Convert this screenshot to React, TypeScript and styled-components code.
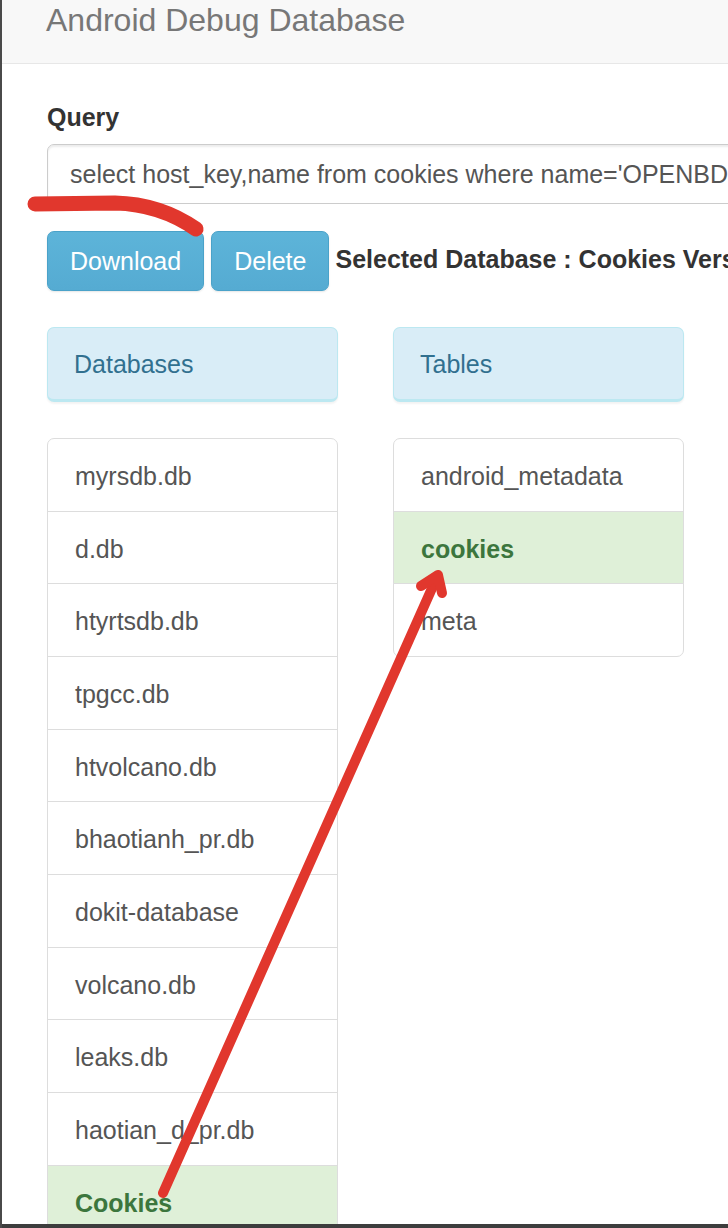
import React from "react";
import styled, { createGlobalStyle } from "styled-components";

const GlobalStyle = createGlobalStyle`
  html, body {
    margin: 0;
    padding: 0;
    background: #ffffff;
    overflow: hidden;
  }
  body {
    font-family: "Liberation Sans", Arial, Helvetica, sans-serif;
  }
  * { box-sizing: border-box; }
`;

const Page = styled.div`
  position: relative;
  width: 728px;
  height: 1228px;
  border-left: 2px solid #4a4a4a;
  display: flex;
  flex-direction: column;
  overflow: hidden;
  background: #fff;
`;

const Navbar = styled.header`
  flex: 0 0 64px;
  background: #f8f8f8;
  border-bottom: 1px solid #e7e7e7;
  padding: 4px 0 0 44px;
`;

const Brand = styled.div`
  font-size: 32px;
  line-height: 32px;
  color: #777;
  white-space: nowrap;
`;

const Main = styled.main`
  flex: 1 1 auto;
  min-height: 0;
  overflow: hidden;
  padding: 35px 0 0 45px;
`;

const Label = styled.div`
  font-weight: bold;
  font-size: 25px;
  line-height: 36px;
  color: #333;
`;

const QueryInput = styled.div`
  margin-top: 9px;
  width: 1200px;
  height: 60px;
  border: 1px solid #ccc;
  border-radius: 7px;
  box-shadow: inset 0 2px 2px rgba(0, 0, 0, 0.075);
  padding: 0 22px;
  display: flex;
  align-items: center;
  font-size: 25px;
  color: #555;
  white-space: nowrap;
`;

const ActionRow = styled.div`
  margin-top: 27px;
  display: flex;
  align-items: center;
  gap: 7px;
  white-space: nowrap;
`;

const Button = styled.button`
  height: 60px;
  padding: 0 22px;
  font-family: inherit;
  font-size: 25px;
  color: #fff;
  background: linear-gradient(#5db4d9, #55abd2);
  border: 1px solid #4aa2c9;
  border-radius: 7px;
  box-shadow: 0 1px 2px rgba(0, 0, 0, 0.1);
`;

const Selected = styled.span`
  margin-left: -1px;
  margin-bottom: 3px;
  font-weight: bold;
  font-size: 25px;
  color: #333;
`;

const Columns = styled.div`
  margin-top: 36px;
  display: grid;
  grid-template-columns: 291px 291px;
  column-gap: 55px;
  align-items: start;
`;

const Column = styled.div`
  display: flex;
  flex-direction: column;
`;

const PanelHeading = styled.div`
  border: 1px solid #bce8f1;
  border-bottom-width: 3px;
  border-radius: 7px;
  background: #d9edf7;
  color: #31708f;
  font-size: 25px;
  line-height: 36px;
  padding: 18px 26px 17px;
  box-shadow: 0 2px 2px rgba(0, 0, 0, 0.05);
`;

const List = styled.ul`
  list-style: none;
  margin: 36px 0 0;
  padding: 0;
`;

const Item = styled.li<{ $active?: boolean }>`
  padding: 20px 27px 16px;
  line-height: 35.67px;
  font-size: 25px;
  border: 1px solid #ddd;
  margin-bottom: -1px;
  background: ${(p) => (p.$active ? "#dff0d8" : "#fff")};
  color: ${(p) => (p.$active ? "#3c763d" : "#555")};
  font-weight: ${(p) => (p.$active ? "bold" : "normal")};
  white-space: nowrap;
  &:first-child {
    border-top-left-radius: 7px;
    border-top-right-radius: 7px;
  }
  &:last-child {
    border-bottom-left-radius: 7px;
    border-bottom-right-radius: 7px;
  }
`;

const BottomBar = styled.div`
  flex: 0 0 4px;
  background: #3d3d3d;
`;

const Overlay = styled.svg`
  position: absolute;
  left: -2px;
  top: 0;
  width: 728px;
  height: 1228px;
  pointer-events: none;
`;

const databases = [
  "myrsdb.db",
  "d.db",
  "htyrtsdb.db",
  "tpgcc.db",
  "htvolcano.db",
  "bhaotianh_pr.db",
  "dokit-database",
  "volcano.db",
  "leaks.db",
  "haotian_d_pr.db",
  "Cookies",
];

const tables = ["android_metadata", "cookies", "meta"];

export default function App() {
  return (
    <>
      <GlobalStyle />
      <Page>
        <Navbar>
          <Brand>Android Debug Database</Brand>
        </Navbar>
        <Main>
          <Label>Query</Label>
          <QueryInput>
            select host_key,name from cookies where name='OPENBDUSS'
          </QueryInput>
          <ActionRow>
            <Button>Download</Button>
            <Button>Delete</Button>
            <Selected>Selected Database : Cookies Version : 12</Selected>
          </ActionRow>
          <Columns>
            <Column>
              <PanelHeading>Databases</PanelHeading>
              <List>
                {databases.map((d) => (
                  <Item key={d} $active={d === "Cookies"}>
                    {d}
                  </Item>
                ))}
              </List>
            </Column>
            <Column>
              <PanelHeading>Tables</PanelHeading>
              <List>
                {tables.map((t) => (
                  <Item key={t} $active={t === "cookies"}>
                    {t}
                  </Item>
                ))}
              </List>
            </Column>
          </Columns>
        </Main>
        <BottomBar />
        <Overlay viewBox="0 0 728 1228">
          <g
            fill="none"
            stroke="#e1372d"
            strokeLinecap="round"
            strokeLinejoin="round"
          >
            <path d="M 35 204 L 115 203 Q 160 204 196 229" strokeWidth="15" />
            <path d="M 163 1193 L 437 577" strokeWidth="10" />
            <path d="M 421 586 L 438 575 L 442 593" strokeWidth="10" />
          </g>
        </Overlay>
      </Page>
    </>
  );
}
